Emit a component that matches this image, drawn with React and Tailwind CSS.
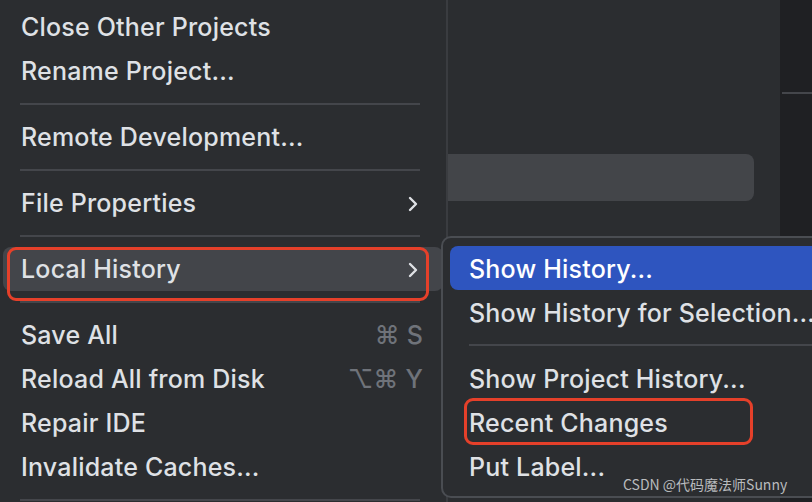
import React from 'react';

// Menu principal (lado esquerdo) — linhas de 44px, separadores de 22px
const mainItems = [
  { label: 'Close Other Projects' },
  { label: 'Rename Project...' },
  { sep: true },
  { label: 'Remote Development...' },
  { sep: true },
  { label: 'File Properties', sub: true },
  { sep: true },
  { label: 'Local History', sub: true, hover: true },
  { sep: true },
  { label: 'Save All', keys: '⌘ S' },
  { label: 'Reload All from Disk', keys: '⌥⌘ Y' },
  { label: 'Repair IDE' },
  { label: 'Invalidate Caches...' },
  { sep: true },
];

const subItems = [
  { label: 'Show History...', active: true },
  { label: 'Show History for Selection...' },
  { sep: true },
  { label: 'Show Project History...' },
  { label: 'Recent Changes', mark: true },
  { label: 'Put Label...' },
];

const Chevron = () => (
  <svg width="12" height="16" viewBox="0 0 12 16" fill="none">
    <polyline points="3,2 9,8 3,14" stroke="#dfe1e5" strokeWidth="2.4" strokeLinecap="round" strokeLinejoin="round" />
  </svg>
);

const Separator = ({ className = '' }) => (
  <div className={`flex h-[22px] items-center ${className}`}>
    <div className="h-[2px] w-full bg-[#44464b]" />
  </div>
);

const MainMenu = () => (
  <div className="relative w-[448px] shrink-0 border-r-2 border-[#3a3c40] bg-[#2b2d30] pt-[5px]">
    {mainItems.map((it, i) =>
      it.sep ? (
        <Separator key={i} className="pl-[20px] pr-[26px]" />
      ) : (
        <div
          key={i}
          className={`relative mx-[3px] flex h-[44px] items-center justify-between rounded-[8px] pl-[18px] pt-[2px] ${
            it.hover ? 'bg-[#43454a]' : ''
          } ${it.keys ? 'pr-[20px]' : 'pr-[24px]'}`}
        >
          <span>{it.label}</span>
          {it.sub && <Chevron />}
          {it.keys && <span className="text-[#6f737a]">{it.keys}</span>}
          {it.hover && (
            <div className="pointer-events-none absolute left-[4px] right-[14px] top-0 h-[54px] rounded-[9px] border-[3px] border-[#e5402a]" />
          )}
        </div>
      )
    )}
  </div>
);

const SubMenu = () => (
  <div className="absolute left-[441px] top-[236px] h-[262px] w-[420px] rounded-[10px] border-2 border-[#4a4d52] bg-[#2b2d30] pt-[8px]">
    {subItems.map((it, i) =>
      it.sep ? (
        <Separator key={i} className="pl-[26px]" />
      ) : (
        <div
          key={i}
          className={`relative ml-[7px] flex h-[44px] items-center whitespace-nowrap rounded-l-[8px] pl-[19px] pt-[3px] ${
            it.active ? 'bg-[#2e55bf] text-white' : ''
          }`}
        >
          {it.label}
          {it.mark && (
            <div className="pointer-events-none absolute left-[14px] top-[-2px] h-[47px] w-[289px] rounded-[9px] border-[3px] border-[#e5402a]" />
          )}
        </div>
      )
    )}
  </div>
);

export default function App() {
  return (
    <div
      className="relative flex h-[502px] w-[812px] overflow-hidden bg-[#2b2d30] text-[25px] font-medium tracking-[0.2px] text-[#dfe1e5]"
      style={{ fontFamily: 'Inter, "Noto Sans", "Noto Sans CJK SC", sans-serif' }}
    >
      <MainMenu />
      {/* Área do editor atrás do menu */}
      <div className="flex-1 pt-[154px]">
        <div className="h-[47px] w-[306px] rounded-r-[8px] bg-[#434549]" />
      </div>
      <div className="w-[32px] shrink-0 bg-[#1f2023] pt-[92px]">
        <div className="ml-[2px] h-[2px] bg-[#44464b]" />
      </div>
      <SubMenu />
      <div
        className="absolute left-[623px] top-[474px] text-[14px] font-normal tracking-normal text-[#b9bbbe]"
        style={{ fontFamily: '"Noto Sans CJK SC", "Noto Sans", sans-serif' }}
      >
        CSDN @代码魔法师Sunny
      </div>
    </div>
  );
}
